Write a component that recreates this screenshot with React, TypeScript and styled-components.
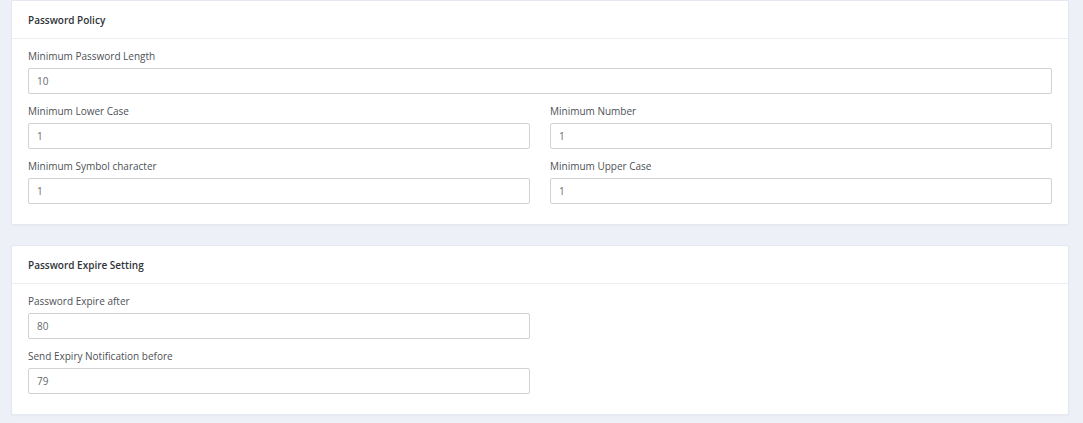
import * as React from 'react'
import styled, {createGlobalStyle} from 'styled-components'

const GlobalStyle = createGlobalStyle`
  html, body {
    margin: 0;
    padding: 0;
    background: #eef0f8;
    font-family: "Open Sans", "Noto Sans", sans-serif;
  }
  * {
    box-sizing: border-box;
  }
`

const Page = styled.div`
  display: flex;
  flex-direction: column;
  gap: 20px;
  padding: 0 14px 8px 11px;
`

const Card = styled.section`
  background: #fff;
  border: 1px solid #e6e8f1;
  border-radius: 2px;
  box-shadow: 0 1px 2px rgba(60, 70, 110, 0.04);
`

const CardHeader = styled.header`
  height: 38px;
  display: flex;
  align-items: center;
  padding: 0 16px;
  border-bottom: 1px solid #ebedf3;
  font-size: 10px;
  font-weight: 600;
  color: #2f3338;
`

const CardBody = styled.div`
  padding: 9px 16px 11px;
`

const Row = styled.div<{$cols: number}>`
  display: grid;
  grid-template-columns: repeat(${p => p.$cols}, minmax(0, 1fr));
  column-gap: 20px;
`

const Group = styled.div`
  display: flex;
  flex-direction: column;
  margin-bottom: 9px;
`

const Label = styled.label`
  font-size: 10px;
  line-height: 16px;
  color: #4d5156;
  margin-bottom: 4px;
`

const Field = styled.input`
  height: 26px;
  width: 100%;
  padding: 0 8px;
  border: 1px solid #d0d2d6;
  border-radius: 2px;
  font-family: inherit;
  font-size: 10px;
  color: #666a6e;
  background: #fff;
  outline: none;
`

type FieldDef = {label: string; value: string}

function FormGroup({label, value}: FieldDef) {
  return (
    <Group>
      <Label>{label}</Label>
      <Field defaultValue={value} />
    </Group>
  )
}

export default function App() {
  return (
    <>
      <GlobalStyle />
      <Page>
        <Card>
          <CardHeader>Password Policy</CardHeader>
          <CardBody>
            <Row $cols={1}>
              <FormGroup label="Minimum Password Length" value="10" />
            </Row>
            <Row $cols={2}>
              <FormGroup label="Minimum Lower Case" value="1" />
              <FormGroup label="Minimum Number" value="1" />
            </Row>
            <Row $cols={2}>
              <FormGroup label="Minimum Symbol character" value="1" />
              <FormGroup label="Minimum Upper Case" value="1" />
            </Row>
          </CardBody>
        </Card>
        <Card>
          <CardHeader>Password Expire Setting</CardHeader>
          <CardBody>
            <Row $cols={2}>
              <FormGroup label="Password Expire after" value="80" />
            </Row>
            <Row $cols={2}>
              <FormGroup label="Send Expiry Notification before" value="79" />
            </Row>
          </CardBody>
        </Card>
      </Page>
    </>
  )
}
